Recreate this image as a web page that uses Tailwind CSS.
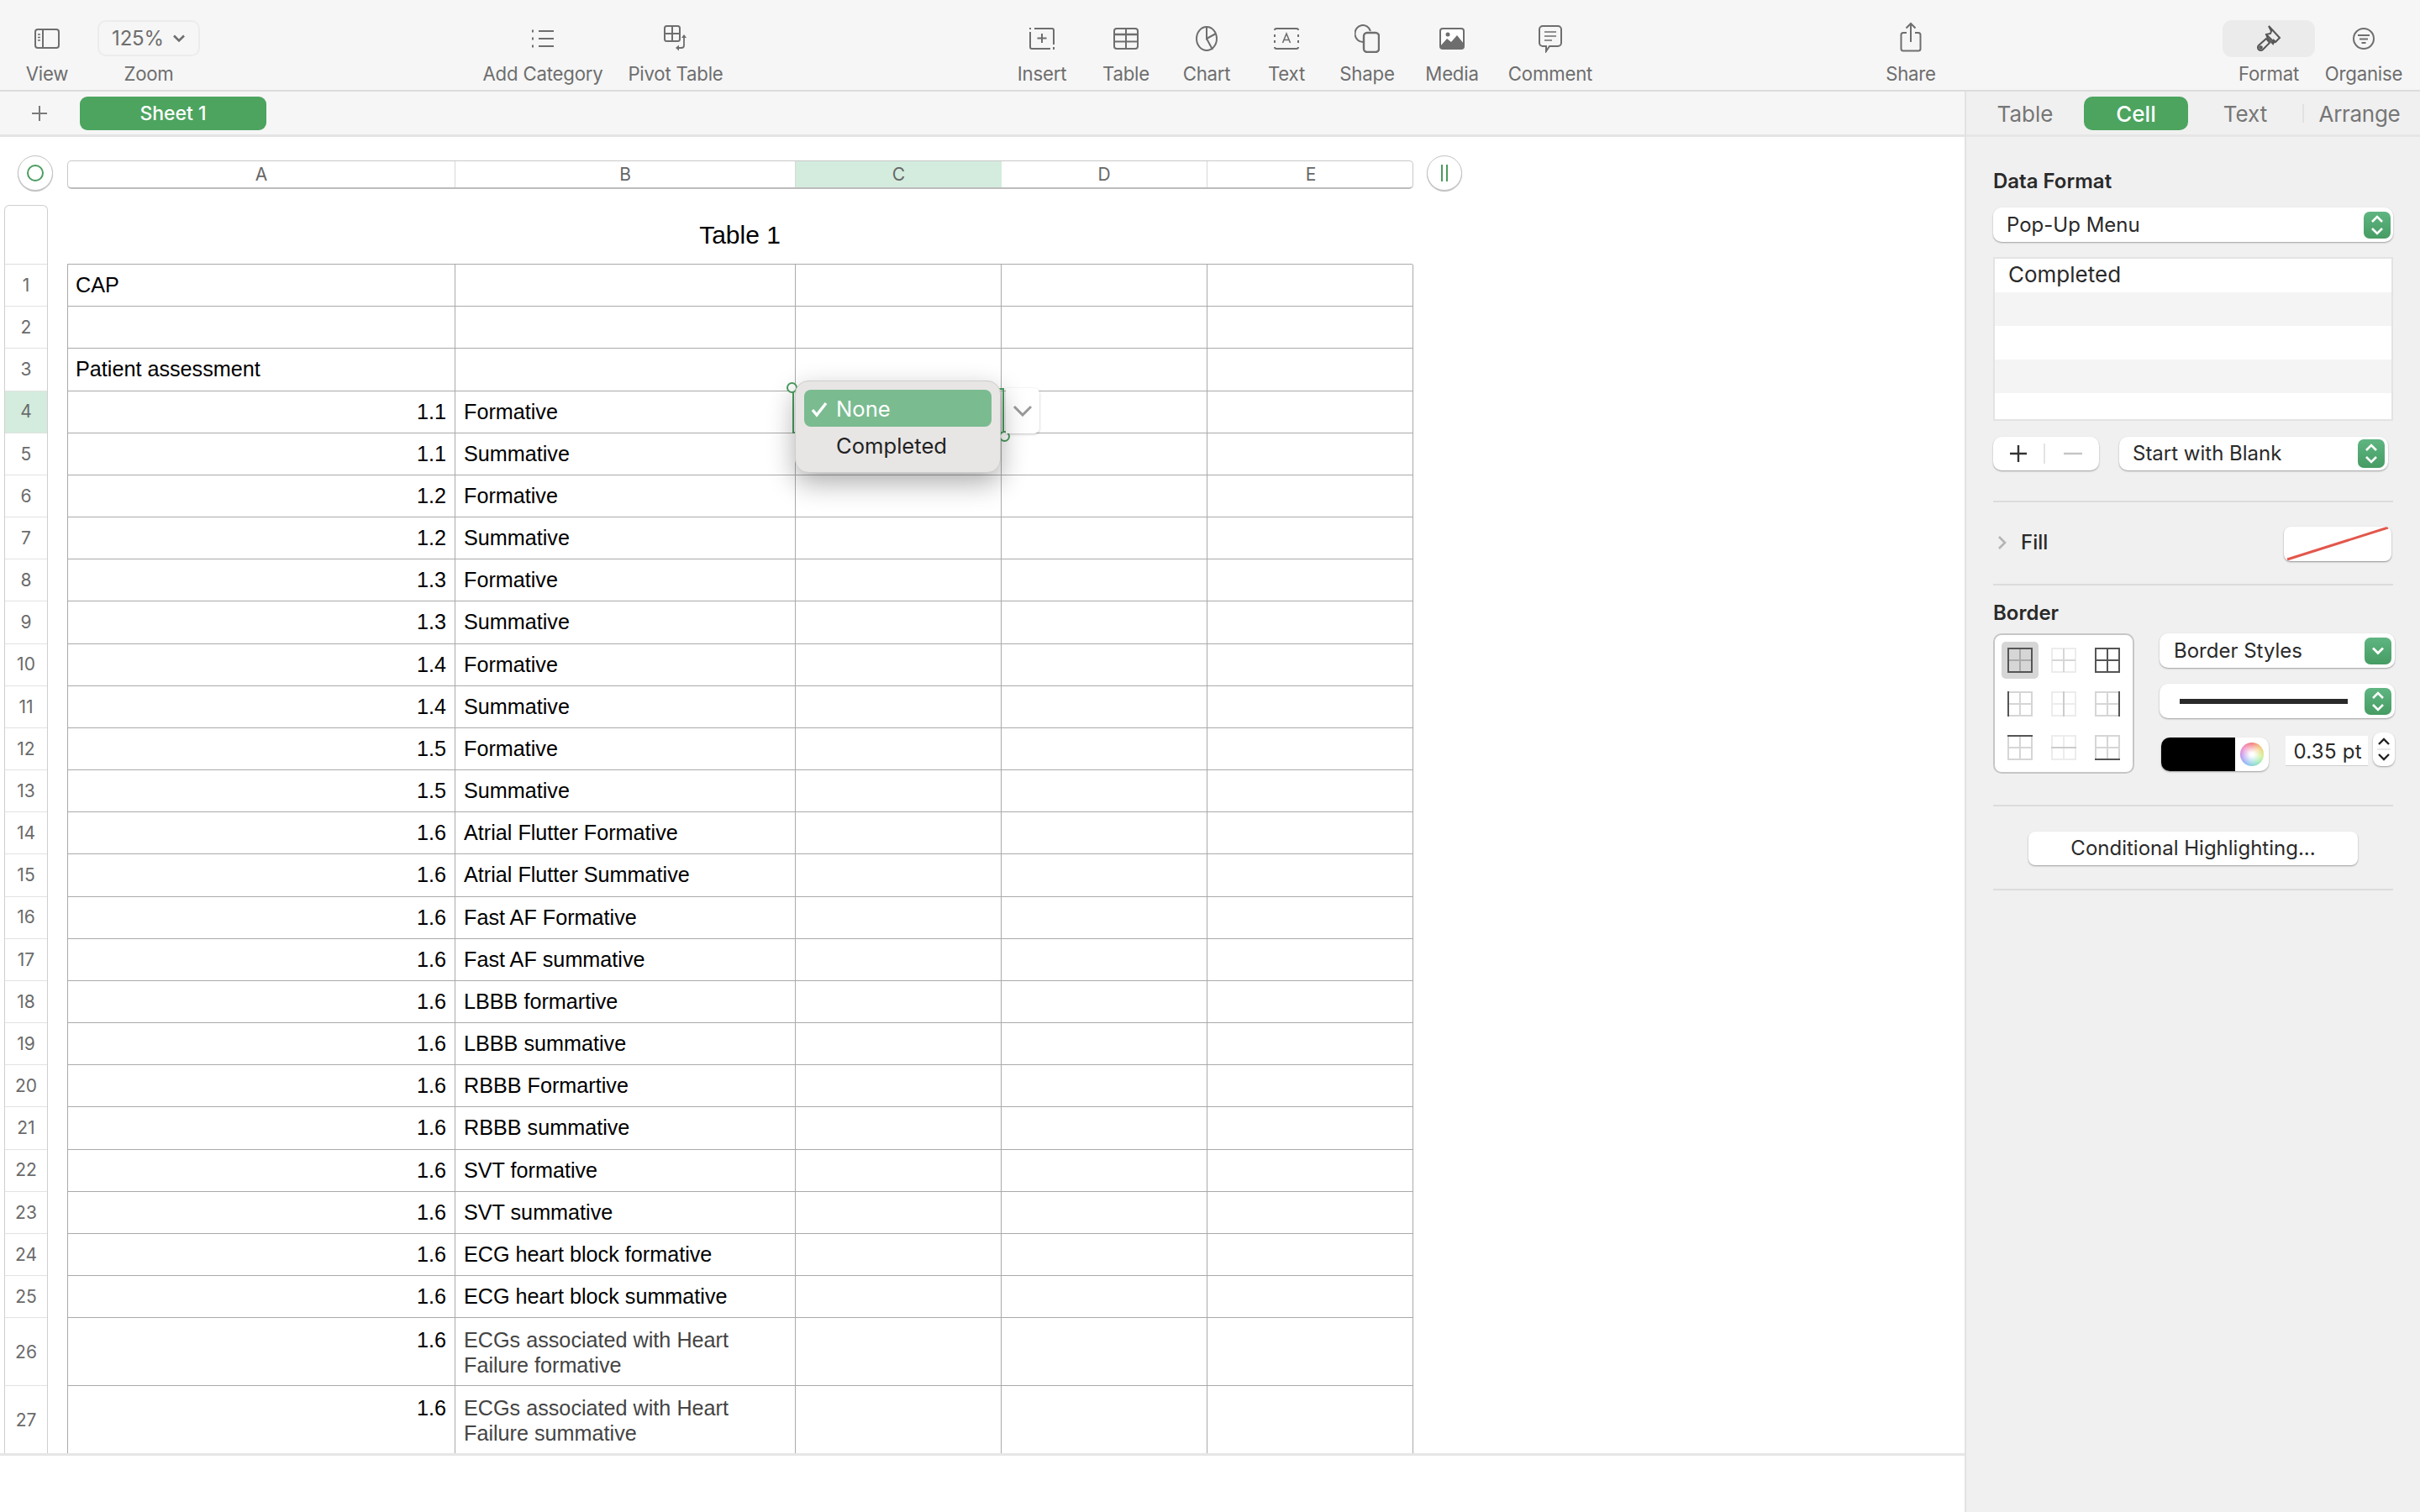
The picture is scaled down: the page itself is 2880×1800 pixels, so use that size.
<!DOCTYPE html>
<html lang="en">
<head>
<meta charset="utf-8">
<title>Numbers</title>
<script src="https://cdn.jsdelivr.net/npm/@tailwindcss/browser@4"></script>
</head>
<body class="m-0 bg-white">
<div class="w-[2880px] h-[1800px] flex flex-col overflow-hidden font-['Inter',sans-serif] text-[#2a2a2a]">

  <!-- toolbar -->
  <header class="h-[109px] shrink-0 flex items-start pl-[20px] pt-[24px] bg-[#f6f6f6] border-b-2 border-[#dcdcdc] text-[22.2px] tracking-[-0.2px] text-[#6e6e6e]">
    <div class="w-[72px] flex flex-col items-center">
      <div class="h-[44px] flex items-center"><svg width="32" height="28" viewBox="0 0 32 28" fill="none" stroke="#6e6e6e" stroke-width="2"><rect x="2" y="3" width="28" height="22" rx="3"/><path d="M11 3v22"/><path d="M5 9h3M5 12.500h3M5 16h3" stroke-width="1.500"/></svg></div>
      <span class="mt-[6px] leading-[28px]">View</span>
    </div>
    <div class="w-[120px] ml-[25px] flex flex-col items-center">
      <div class="h-[43px] w-[122px] rounded-[10px] border-2 border-[#ececec] flex items-center justify-center gap-[10px] text-[24px]"><span>125%</span><svg width="16" height="12" viewBox="0 0 16 12" fill="none" stroke="#6e6e6e" stroke-width="2.600"><path d="M2 2.500l6 6 6-6"/></svg></div>
      <span class="mt-[7px] leading-[28px]">Zoom</span>
    </div>
    <div class="w-[150px] ml-[334px] flex flex-col items-center">
      <div class="h-[44px] flex items-center"><svg width="28" height="24" viewBox="0 0 28 24" fill="none" stroke="#6e6e6e" stroke-width="2"><path d="M9 3h18M9 12h18M9 21h18"/><path d="M2 1.500v3M2 10.500v3M2 19.500v3"/></svg></div>
      <span class="mt-[6px] leading-[28px]">Add Category</span>
    </div>
    <div class="w-[150px] ml-[8px] flex flex-col items-center">
      <div class="h-[44px] flex items-center"><svg width="30" height="32" viewBox="0 0 30 32" fill="none" stroke="#6e6e6e" stroke-width="2"><rect x="2" y="1" width="18" height="18" rx="2.500"/><path d="M11 1v18M2 10h18"/><path d="M25 12v12a3 3 0 0 1-3 3h-5" stroke-width="1.800"/><path d="M22 15l3-4 3 4z" fill="#6e6e6e" stroke="none"/><path d="M19 23.500l-4 3.500 4 3.500z" fill="#6e6e6e" stroke="none"/></svg></div>
      <span class="mt-[6px] leading-[28px]">Pivot Table</span>
    </div>
    <div class="w-[80px] ml-[321px] flex flex-col items-center">
      <div class="h-[44px] flex items-center"><svg width="32" height="28" viewBox="0 0 32 28" fill="none" stroke="#6e6e6e" stroke-width="2"><path d="M2 6v18a2 2 0 0 0 2 2h22M7 2h21a2 2 0 0 1 2 2v17"/><path d="M2 1v2M30 24v3" stroke-width="2"/><path d="M16 8v11M10.500 13.500h11"/></svg></div>
      <span class="mt-[6px] leading-[28px]">Insert</span>
    </div>
    <div class="w-[80px] ml-[20px] flex flex-col items-center">
      <div class="h-[44px] flex items-center"><svg width="32" height="28" viewBox="0 0 32 28" fill="none" stroke="#6e6e6e" stroke-width="2"><rect x="2" y="2" width="28" height="24" rx="3"/><path d="M2 9h28" stroke-width="2.500"/><path d="M2 17.500h28M16 2v24"/></svg></div>
      <span class="mt-[6px] leading-[28px]">Table</span>
    </div>
    <div class="w-[80px] ml-[16px] flex flex-col items-center">
      <div class="h-[44px] flex items-center"><svg width="28" height="32" viewBox="0 0 28 32" fill="none" stroke="#6e6e6e" stroke-width="2"><ellipse cx="14" cy="16" rx="12" ry="14"/><path d="M14 2v14l11-6M14 16l7 13"/></svg></div>
      <span class="mt-[6px] leading-[28px]">Chart</span>
    </div>
    <div class="w-[80px] ml-[15px] flex flex-col items-center">
      <div class="h-[44px] flex items-center"><svg width="32" height="28" viewBox="0 0 32 28" fill="none" stroke="#6e6e6e" stroke-width="2"><path d="M4 2h24a2 2 0 0 1 2 2M2 4a2 2 0 0 1 2-2M4 26h24a2 2 0 0 0 2-2M2 24a2 2 0 0 0 2 2"/><path d="M2 9v3M2 16v3M30 9v3M30 16v3"/><path d="M11.500 19l4.500-11 4.500 11M13 15.500h6" stroke-width="1.600"/></svg></div>
      <span class="mt-[6px] leading-[28px]">Text</span>
    </div>
    <div class="w-[80px] ml-[16px] flex flex-col items-center">
      <div class="h-[44px] flex items-center"><svg width="30" height="34" viewBox="0 0 30 34" fill="none" stroke="#6e6e6e" stroke-width="2"><path d="M10 21a9.500 10 0 1 1 9-13"/><rect x="11" y="10" width="18" height="23" rx="4" stroke-width="2.400"/></svg></div>
      <span class="mt-[6px] leading-[28px]">Shape</span>
    </div>
    <div class="w-[80px] ml-[21px] flex flex-col items-center">
      <div class="h-[44px] flex items-center"><svg width="32" height="28" viewBox="0 0 32 28"><rect x="2" y="2" width="28" height="24" rx="3" fill="#fff" stroke="#6e6e6e" stroke-width="2"/><path d="M2 23l8-9 5 4 7-8 8 10v3a3 3 0 0 1-3 3H5a3 3 0 0 1-3-3z" fill="#6e6e6e"/><circle cx="11" cy="9" r="2.500" fill="#6e6e6e"/></svg></div>
      <span class="mt-[6px] leading-[28px]">Media</span>
    </div>
    <div class="w-[110px] ml-[22px] flex flex-col items-center">
      <div class="h-[44px] flex items-center"><svg width="30" height="34" viewBox="0 0 30 34" fill="none" stroke="#6e6e6e" stroke-width="2"><path d="M6 2h18a4 4 0 0 1 4 4v16a4 4 0 0 1-4 4H14l-4 6v-6H6a4 4 0 0 1-4-4V6a4 4 0 0 1 4-4z"/><path d="M8 9h14M8 14h14M8 19h9" stroke-width="1.600"/></svg></div>
      <span class="mt-[6px] leading-[28px]">Comment</span>
    </div>
    <div class="w-[80px] ml-[334px] flex flex-col items-center">
      <div class="h-[44px] flex items-center"><svg class="-mt-[4px]" width="26" height="36" viewBox="0 0 26 36" fill="none" stroke="#6e6e6e" stroke-width="2"><path d="M8 13H4a2.500 2.500 0 0 0-2.500 2.500V32A2.500 2.500 0 0 0 4 34.500h18a2.500 2.500 0 0 0 2.500-2.500V15.500A2.500 2.500 0 0 0 22 13h-4"/><path d="M13 24V2M7.500 7.500L13 2l5.500 5.500"/></svg></div>
      <span class="mt-[6px] leading-[28px]">Share</span>
    </div>
    <div class="w-[110px] ml-[331px] flex flex-col items-center">
      <div class="h-[44px] w-[110px] rounded-[11px] bg-[#ebebeb] flex items-center justify-center"><svg width="30" height="32" viewBox="0 0 30 32" fill="none" stroke="#555" stroke-width="2"><path d="M15 1l13 14-5 5-2-2-1 4-6-6-2-5 5-1 1-3z"/><path d="M13 12l9 9"/><path d="M12 16l4 5-8 8a3.500 3.500 0 1 1-5-5z"/><circle cx="5.500" cy="26.500" r="1.300"/></svg></div>
      <span class="mt-[6px] leading-[28px]">Format</span>
    </div>
    <div class="w-[100px] ml-[8px] flex flex-col items-center">
      <div class="h-[44px] flex items-center"><svg width="28" height="28" viewBox="0 0 28 28" fill="none" stroke="#6e6e6e" stroke-width="2"><circle cx="14" cy="14" r="12"/><path d="M7 10h14M9 14.500h10M11.500 19h5"/></svg></div>
      <span class="mt-[6px] leading-[28px]">Organise</span>
    </div>
  </header>

  <div class="flex-1 flex min-h-0">
    <!-- left pane -->
    <main class="w-[2338px] shrink-0 flex flex-col">
      <div class="h-[54px] shrink-0 flex items-center bg-[#f6f6f6] border-b-[3px] border-[#e4e4e4] pt-[1px]">
        <svg class="ml-[36px]" width="22" height="22" viewBox="0 0 22 22" fill="none" stroke="#7a7a7a" stroke-width="2"><path d="M11 2v18M2 11h18"/></svg>
        <div class="ml-[37px] w-[222px] h-[40px] rounded-[9px] bg-[#4ca45f] text-white text-[23px] font-medium flex items-center justify-center">Sheet 1</div>
      </div>

      <section class="relative h-[1570px] shrink-0 overflow-hidden bg-white border-b-[3px] border-[#e6e6e6]">
        <!-- column headers -->
        <div class="flex items-start pl-[21px] pt-[22px]">
          <div class="w-[42px] h-[42px] rounded-full bg-white border border-[#c4c4c4] shadow-[0_1px_1px_#bbb] flex items-center justify-center"><div class="w-[20px] h-[20px] rounded-full border-2 border-[#4b9c5f]"></div></div>
          <div class="ml-[17px] w-[1602px] h-[34px] mt-[6px] grid grid-cols-[461px_405px_245px_245px_246px] rounded-[5px] overflow-hidden border border-[#c8c8c8] border-b-2 border-b-[#bcbcbc] text-[21px] text-[#666] text-center leading-[32px]">
            <div class="border-r border-[#d8d8d8]">A</div>
            <div class="border-r border-[#d8d8d8]">B</div>
            <div class="bg-[#d3ecdd]">C</div>
            <div class="border-r border-[#d8d8d8]">D</div>
            <div>E</div>
          </div>
          <div class="ml-[16px] w-[42px] h-[42px] rounded-full bg-white border border-[#c4c4c4] shadow-[0_1px_1px_#bbb] flex items-center justify-center gap-[4px]"><div class="w-[2px] h-[20px] bg-[#4b9c5f]"></div><div class="w-[2px] h-[20px] bg-[#4b9c5f]"></div></div>
        </div>

        <div class="flex mt-[17px] pl-[5px]">
          <!-- row headers -->
          <div class="w-[52px] shrink-0 border-x border-[#cfcfcf] rounded-t-[6px] border-t text-[21px] text-[#6b6b6b] text-center">
            <div class="h-[70px] border-b border-[#dedede]"></div>
            <div class="grid grid-rows-[repeat(25,50.18px)_81px_81px] [&>div]:flex [&>div]:items-center [&>div]:justify-center [&>div]:border-b [&>div]:border-[#e2e2e2]">
              <div>1</div><div>2</div><div>3</div><div class="bg-[#d3ecdd]">4</div><div>5</div><div>6</div><div>7</div><div>8</div><div>9</div><div>10</div><div>11</div><div>12</div><div>13</div><div>14</div><div>15</div><div>16</div><div>17</div><div>18</div><div>19</div><div>20</div><div>21</div><div>22</div><div>23</div><div>24</div><div>25</div><div>26</div><div>27</div>
            </div>
          </div>

          <!-- table -->
          <div class="ml-[23px] w-[1601px] shrink-0 font-['Liberation_Sans',sans-serif] text-[25.2px] text-black">
            <div class="h-[70px] flex items-center justify-center text-[30px]">Table 1</div>
            <div class="grid grid-cols-[461px_405px_245px_245px_245px] grid-rows-[repeat(25,50.18px)_81px_81px] border-t border-l border-[#aaaaaa] [&>div]:border-r [&>div]:border-b [&>div]:border-[#aaaaaa] [&>div]:px-[10px] [&>div:nth-child(5n+1)]:pl-[9px] [&>div]:leading-[49.5px]">
              <div>CAP</div><div></div><div></div><div></div><div></div>
              <div></div><div></div><div></div><div></div><div></div>
              <div>Patient assessment</div><div></div><div></div><div></div><div></div>
              <div class="text-right">1.1</div><div>Formative</div><div></div><div></div><div></div>
              <div class="text-right">1.1</div><div>Summative</div><div></div><div></div><div></div>
              <div class="text-right">1.2</div><div>Formative</div><div></div><div></div><div></div>
              <div class="text-right">1.2</div><div>Summative</div><div></div><div></div><div></div>
              <div class="text-right">1.3</div><div>Formative</div><div></div><div></div><div></div>
              <div class="text-right">1.3</div><div>Summative</div><div></div><div></div><div></div>
              <div class="text-right">1.4</div><div>Formative</div><div></div><div></div><div></div>
              <div class="text-right">1.4</div><div>Summative</div><div></div><div></div><div></div>
              <div class="text-right">1.5</div><div>Formative</div><div></div><div></div><div></div>
              <div class="text-right">1.5</div><div>Summative</div><div></div><div></div><div></div>
              <div class="text-right">1.6</div><div>Atrial Flutter Formative</div><div></div><div></div><div></div>
              <div class="text-right">1.6</div><div>Atrial Flutter Summative</div><div></div><div></div><div></div>
              <div class="text-right">1.6</div><div>Fast AF Formative</div><div></div><div></div><div></div>
              <div class="text-right">1.6</div><div>Fast AF summative</div><div></div><div></div><div></div>
              <div class="text-right">1.6</div><div>LBBB formartive</div><div></div><div></div><div></div>
              <div class="text-right">1.6</div><div>LBBB summative</div><div></div><div></div><div></div>
              <div class="text-right">1.6</div><div>RBBB Formartive</div><div></div><div></div><div></div>
              <div class="text-right">1.6</div><div>RBBB summative</div><div></div><div></div><div></div>
              <div class="text-right">1.6</div><div>SVT formative</div><div></div><div></div><div></div>
              <div class="text-right">1.6</div><div>SVT summative</div><div></div><div></div><div></div>
              <div class="text-right">1.6</div><div>ECG heart block formative</div><div></div><div></div><div></div>
              <div class="text-right">1.6</div><div>ECG heart block summative</div><div></div><div></div><div></div>
              <div class="text-right pt-[11px] !leading-[30px]">1.6</div><div class="pt-[11px] !leading-[30px] text-[#444]">ECGs associated with Heart Failure formative</div><div></div><div></div><div></div>
              <div class="text-right pt-[11px] !leading-[30px]">1.6</div><div class="pt-[11px] !leading-[30px] text-[#444]">ECGs associated with Heart Failure summative</div><div></div><div></div><div></div>
            </div>
          </div>
        </div>

        <!-- selected cell and pop-up menu -->
        <div class="absolute left-[943px] top-[299px] w-[252px] h-[54px] border-2 border-[#4b9c5f]"></div>
        <div class="absolute left-[936px] top-[292px] w-[13px] h-[13px] rounded-full bg-white border-2 border-[#4b9c5f]"></div>
        <div class="absolute left-[1189px] top-[350px] w-[13px] h-[13px] rounded-full bg-white border-2 border-[#4b9c5f]"></div>
        <div class="absolute left-[1197px] top-[299px] w-[40px] h-[54px] rounded-r-[6px] bg-white shadow-[0_1px_3px_rgba(0,0,0,0.25)] flex items-center justify-center"><svg width="24" height="14" viewBox="0 0 24 14" fill="none" stroke="#9a9a9a" stroke-width="3"><path d="M2 2l10 10 10-10"/></svg></div>
        <div class="absolute left-[946px] top-[290px] w-[245px] h-[110px] rounded-[16px] bg-[#e8e6e5] border border-[#cfcdcc] shadow-[0_12px_32px_rgba(0,0,0,0.32)] px-[10px] pt-[10px] font-['Inter',sans-serif] text-[25.6px]">
          <div class="h-[44px] rounded-[8px] bg-[#7abb90] text-white flex items-center pt-[2px]"><svg class="ml-[8px]" width="20" height="20" viewBox="0 0 20 20" fill="none" stroke="#fff" stroke-width="3.400"><path d="M2 11l5 6L18 3"/></svg><span class="ml-[10px]">None</span></div>
          <div class="h-[44px] flex items-center pl-[38px] pt-[2px] text-[#222]">Completed</div>
        </div>
      </section>
      <div class="flex-1 bg-white"></div>
    </main>

    <!-- inspector -->
    <aside class="flex-1 flex flex-col bg-[#f0f0f0] border-l-2 border-[#e2e2e2] text-[24px]">
      <div class="h-[54px] shrink-0 flex items-center border-b-[3px] border-[#e6e6e6] pt-[1px] text-[26px] text-[#767676]">
        <div class="w-[140px] text-center">Table</div>
        <div class="w-[124px] h-[40px] rounded-[10px] bg-[#4ca45f] text-white font-medium flex items-center justify-center">Cell</div>
        <div class="w-[136px] text-center">Text</div>
        <div class="w-[2px] h-[22px] bg-[#e2e2e2]"></div>
        <div class="w-[132px] text-center tracking-[-0.3px]">Arrange</div>
      </div>

      <div class="pl-[32px] pr-[32px] flex flex-col">
        <div class="mt-[38px] h-[30px] leading-[30px] font-semibold text-[#2a2a2a]">Data Format</div>
        <div class="mt-[16px] h-[41px] rounded-[10px] bg-white shadow-[0_1px_2px_rgba(0,0,0,0.35)] flex items-center justify-between pl-[16px] pr-[3px]">
          <span>Pop-Up Menu</span>
          <div class="w-[32px] h-[32px] rounded-[7px] bg-gradient-to-b from-[#5fb581] to-[#469c63] flex items-center justify-center"><svg width="18" height="26" viewBox="0 0 18 26" fill="none" stroke="#fff" stroke-width="2.600"><path d="M3 9l6-6 6 6M3 17l6 6 6-6"/></svg></div>
        </div>
        <div class="mt-[18px] h-[195px] border-2 border-[#e3e3e3] bg-white flex flex-col text-[26px]">
          <div class="h-[40px] leading-[38px] pl-[16px]">Completed</div>
          <div class="h-[40px] bg-[#f4f4f4]"></div>
          <div class="h-[40px]"></div>
          <div class="h-[40px] bg-[#f4f4f4]"></div>
        </div>
        <div class="mt-[19px] flex items-center gap-[24px]">
          <div class="w-[126px] h-[40px] rounded-[10px] bg-white shadow-[0_1px_2px_rgba(0,0,0,0.35)] flex items-center">
            <svg class="ml-[19px]" width="22" height="22" viewBox="0 0 22 22" fill="none" stroke="#333" stroke-width="2.400"><path d="M11 1v20M1 11h20"/></svg>
            <div class="ml-[19px] w-[2px] h-[24px] bg-[#e4e4e4]"></div>
            <svg class="ml-[22px]" width="22" height="4" viewBox="0 0 22 4"><path d="M0 2h22" stroke="#c4c4c4" stroke-width="2.400"/></svg>
          </div>
          <div class="w-[320px] h-[40px] rounded-[10px] bg-white shadow-[0_1px_2px_rgba(0,0,0,0.35)] flex items-center justify-between pl-[16px] pr-[4px]">
            <span>Start with Blank</span>
            <div class="w-[32px] h-[34px] rounded-[7px] bg-gradient-to-b from-[#5fb581] to-[#469c63] flex items-center justify-center"><svg width="18" height="26" viewBox="0 0 18 26" fill="none" stroke="#fff" stroke-width="2.600"><path d="M3 9l6-6 6 6M3 17l6 6 6-6"/></svg></div>
          </div>
        </div>

        <div class="mt-[36px] h-[2px] bg-[#dcdcdc]"></div>

        <div class="mt-[29px] flex items-center justify-between pl-[5px] pr-[2px]">
          <div class="flex items-center -mt-[3px]">
            <svg width="12" height="18" viewBox="0 0 12 18" fill="none" stroke="#b4b4b4" stroke-width="2.600"><path d="M2 2l7 7-7 7"/></svg>
            <span class="ml-[16px] font-medium">Fill</span>
          </div>
          <div class="w-[128px] h-[41px] rounded-[8px] bg-white shadow-[0_1px_2px_rgba(0,0,0,0.4)] overflow-hidden"><svg width="128" height="41" viewBox="0 0 128 41"><path d="M4 39L124 1" stroke="#e2574c" stroke-width="3"/></svg></div>
        </div>

        <div class="mt-[27px] h-[2px] bg-[#dcdcdc]"></div>

        <div class="mt-[18px] h-[30px] leading-[30px] font-semibold">Border</div>
        <div class="mt-[9px] flex justify-between">
          <div class="w-[168px] h-[167px] rounded-[10px] bg-white border-2 border-[#c6c6c6] grid grid-cols-3 gap-[8px] p-[8px] [&>div]:w-[44px] [&>div]:h-[44px] [&>div]:flex [&>div]:items-center [&>div]:justify-center">
            <div class="rounded-[5px] bg-[#d6d6d6]"><svg width="30" height="30" viewBox="0 0 30 30" fill="none"><path d="M15 1v28M1 15h28" stroke="#ababab" stroke-width="2"/><rect x="1" y="1" width="28" height="28" stroke="#555" stroke-width="2"/></svg></div>
            <div><svg width="30" height="30" viewBox="0 0 30 30" fill="none"><rect x="1" y="1" width="28" height="28" stroke="#ececec" stroke-width="2"/><path d="M15 1v28M1 15h28" stroke="#d6d6d6" stroke-width="2"/></svg></div>
            <div><svg width="30" height="30" viewBox="0 0 30 30" fill="none" stroke="#555" stroke-width="2"><rect x="1" y="1" width="28" height="28"/><path d="M15 1v28M1 15h28"/></svg></div>
            <div><svg width="30" height="30" viewBox="0 0 30 30" fill="none"><rect x="1" y="1" width="28" height="28" stroke="#d6d6d6" stroke-width="2"/><path d="M15 1v28M1 15h28" stroke="#d6d6d6" stroke-width="2"/><path d="M1 0v30" stroke="#555" stroke-width="2"/></svg></div>
            <div><svg width="30" height="30" viewBox="0 0 30 30" fill="none"><rect x="1" y="1" width="28" height="28" stroke="#ececec" stroke-width="2"/><path d="M1 15h28" stroke="#ececec" stroke-width="2"/><path d="M15 0v30" stroke="#cccccc" stroke-width="2"/></svg></div>
            <div><svg width="30" height="30" viewBox="0 0 30 30" fill="none"><rect x="1" y="1" width="28" height="28" stroke="#d6d6d6" stroke-width="2"/><path d="M15 1v28M1 15h28" stroke="#d6d6d6" stroke-width="2"/><path d="M29 0v30" stroke="#555" stroke-width="2"/></svg></div>
            <div><svg width="30" height="30" viewBox="0 0 30 30" fill="none"><rect x="1" y="1" width="28" height="28" stroke="#d6d6d6" stroke-width="2"/><path d="M15 1v28M1 15h28" stroke="#d6d6d6" stroke-width="2"/><path d="M0 1h30" stroke="#555" stroke-width="2"/></svg></div>
            <div><svg width="30" height="30" viewBox="0 0 30 30" fill="none"><rect x="1" y="1" width="28" height="28" stroke="#ececec" stroke-width="2"/><path d="M15 1v28" stroke="#ececec" stroke-width="2"/><path d="M0 15h30" stroke="#cccccc" stroke-width="2"/></svg></div>
            <div><svg width="30" height="30" viewBox="0 0 30 30" fill="none"><rect x="1" y="1" width="28" height="28" stroke="#d6d6d6" stroke-width="2"/><path d="M15 1v28M1 15h28" stroke="#d6d6d6" stroke-width="2"/><path d="M0 29h30" stroke="#555" stroke-width="2"/></svg></div>
          </div>

          <div class="w-[280px] -mr-[2px] flex flex-col">
            <div class="h-[41px] rounded-[10px] bg-white shadow-[0_1px_2px_rgba(0,0,0,0.35)] flex items-center justify-between pl-[17px] pr-[4px]">
              <span>Border Styles</span>
              <div class="w-[32px] h-[32px] rounded-[7px] bg-gradient-to-b from-[#5fb581] to-[#469c63] flex items-center justify-center"><svg width="16" height="12" viewBox="0 0 16 12" fill="none" stroke="#fff" stroke-width="2.800"><path d="M2 2.500l6 6 6-6"/></svg></div>
            </div>
            <div class="mt-[19px] h-[41px] rounded-[10px] bg-white shadow-[0_1px_2px_rgba(0,0,0,0.35)] flex items-center justify-between pl-[24px] pr-[4px]">
              <div class="w-[200px] h-[6px] bg-[#2a2a2a]"></div>
              <div class="w-[32px] h-[32px] rounded-[7px] bg-gradient-to-b from-[#5fb581] to-[#469c63] flex items-center justify-center"><svg width="18" height="26" viewBox="0 0 18 26" fill="none" stroke="#fff" stroke-width="2.600"><path d="M3 9l6-6 6 6M3 17l6 6 6-6"/></svg></div>
            </div>
            <div class="mt-[17px] flex items-start">
              <div class="ml-[2px] mt-[6px] w-[128px] h-[40px] rounded-[10px] bg-white shadow-[0_1px_2px_rgba(0,0,0,0.35)] overflow-hidden flex items-center">
                <div class="w-[88px] h-full bg-black"></div>
                <div class="ml-[6px] w-[28px] h-[28px] rounded-full bg-[radial-gradient(circle,#ffffff_10%,transparent_75%),conic-gradient(#f26d6d,#f2c46d,#c9f08a,#7fe0c0,#80b8f0,#b48cf0,#f07fc0,#f26d6d)]"></div>
              </div>
              <div class="ml-[20px] mt-[4px] w-[98px] h-[36px] bg-white border-b border-[#cfcfcf] text-right pr-[7px] leading-[38px] tracking-[0.3px] shrink-0">0.35 pt</div>
              <div class="ml-[6px] w-[26px] h-[40px] rounded-[9px] bg-white shadow-[0_1px_2px_rgba(0,0,0,0.35)] shrink-0 flex items-center justify-center"><svg width="16" height="32" viewBox="0 0 16 32" fill="none" stroke="#222" stroke-width="2.400"><path d="M2 10l6-6 6 6M2 22l6 6 6-6"/><path d="M0 16h16" stroke="#e2e2e2" stroke-width="1.500"/></svg></div>
            </div>
          </div>
        </div>

        <div class="mt-[37px] h-[2px] bg-[#dcdcdc]"></div>

        <div class="mt-[30px] mx-[42px] h-[40px] rounded-[8px] bg-white shadow-[0_1px_2px_rgba(0,0,0,0.35)] flex items-center justify-center">Conditional Highlighting...</div>

        <div class="mt-[28px] h-[2px] bg-[#dcdcdc]"></div>
      </div>
    </aside>
  </div>
</div>
</body>
</html>
